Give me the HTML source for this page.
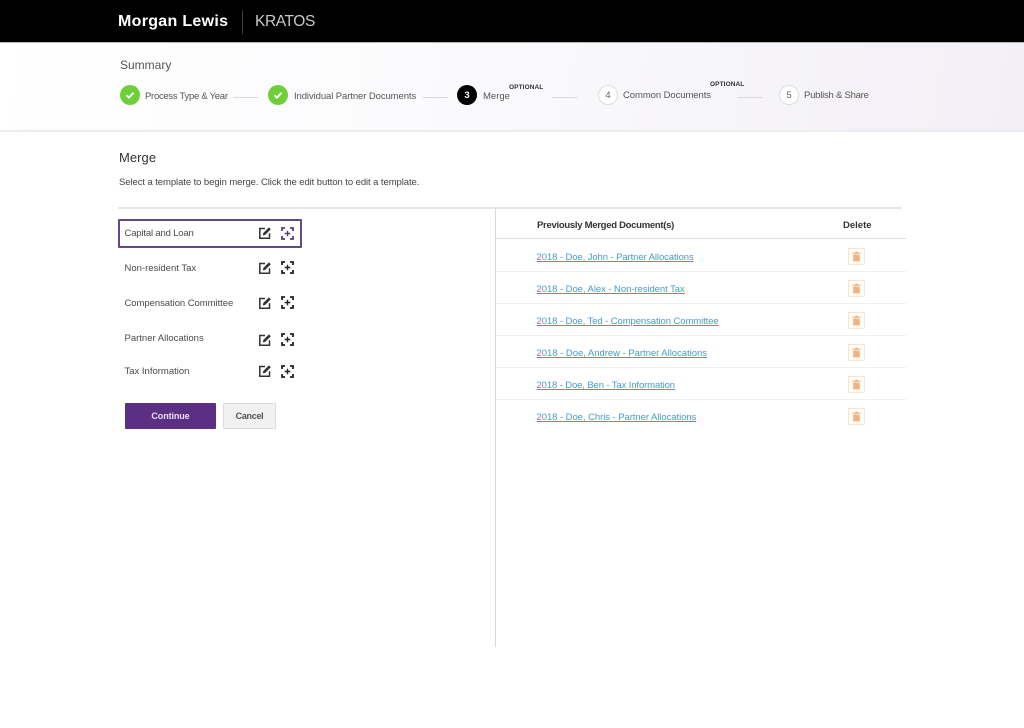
<!DOCTYPE html>
<html lang="en">
<head>
<meta charset="utf-8">
<title>Merge - Kratos</title>
<style>
html,body{margin:0;padding:0;background:#fff}
body{position:relative;width:1024px;height:728px;overflow:hidden;font-family:"Liberation Sans",sans-serif;color:#444}
#w{position:absolute;left:0;top:0;width:1024px;height:728px;filter:blur(.3px)}
.a{position:absolute;white-space:nowrap;line-height:16px}
.hdr{position:absolute;left:-10px;top:-10px;width:1044px;height:52px;background:#000;box-shadow:0 1px 3px rgba(0,0,0,.45)}
.band{position:absolute;left:-10px;top:43px;width:1044px;height:87px;background:linear-gradient(100deg,#fff 0%,#fbfbfd 40%,#f2eff6 100%);border-bottom:2px solid #ececee}
.st{font-size:9.5px;color:#555}
.line{position:absolute;height:1px;background:#d8d8dc;width:25px;top:97px}
.c{position:absolute;width:20px;height:20px;border-radius:50%;top:85px;text-align:center;line-height:21px;font-size:9.5px;box-sizing:border-box}
.done{background:#6fcf3a}
.cur{background:#000;color:#fff;font-weight:bold}
.todo{background:#fff;border:1px solid #ddd;color:#666;line-height:19px}
.opt{font-size:6.5px;font-weight:bold;color:#333;letter-spacing:.1px}
.lbl{font-size:9.5px;color:#4a4a4a;left:124.5px}
.ico{position:absolute;width:14px;height:14px}
.foc{position:absolute;width:13px;height:13px}
.row{position:absolute;left:496px;width:410px;height:1px;background:#f1f1f1}
.lnk{left:536.5px;font-size:9.5px;color:#3f9fc9;text-decoration:underline}
.del{position:absolute;left:848px;width:15px;height:15px;border:1px solid #f3e6d6;border-radius:1px;background:#fffdfa}
.del svg{position:absolute;left:2px;top:2px}
</style>
</head>
<body>
<div id="w">
<div class="hdr"></div>
<div class="a" style="left:118px;top:12px;line-height:20px;font-size:16px;font-weight:bold;color:#fff;letter-spacing:.3px">Morgan Lewis</div>
<div class="a" style="left:242px;top:10px;width:1px;height:24px;background:#3a3a3a"></div>
<div class="a" style="left:255px;top:12px;line-height:20px;font-size:15.5px;color:#c9c9c9;letter-spacing:-.4px">KRATOS</div>

<div class="band"></div>
<div class="a" style="left:120px;top:57px;font-size:12px;color:#555">Summary</div>

<div class="c done" style="left:119.5px"><svg width="20" height="20" viewBox="0 0 20 20"><path d="M6.5 10.2l2.4 2.4 4.6-4.8" fill="none" stroke="#fff" stroke-width="1.9"/></svg></div>
<div class="a st" style="left:145px;top:88.500px;letter-spacing:-.28px">Process Type &amp; Year</div>
<div class="line" style="left:233px"></div>
<div class="c done" style="left:268px"><svg width="20" height="20" viewBox="0 0 20 20"><path d="M6.5 10.2l2.4 2.4 4.6-4.8" fill="none" stroke="#fff" stroke-width="1.9"/></svg></div>
<div class="a st" style="left:294px;top:88.500px;letter-spacing:-.09px">Individual Partner Documents</div>
<div class="line" style="left:423px"></div>
<div class="c cur" style="left:457px">3</div>
<div class="a st" style="left:483px;top:88.500px">Merge</div>
<div class="a opt" style="left:509px;top:80px">OPTIONAL</div>
<div class="line" style="left:552px"></div>
<div class="c todo" style="left:598px">4</div>
<div class="a st" style="left:623px;top:87.500px;letter-spacing:-.08px">Common Documents</div>
<div class="a opt" style="left:710px;top:77px">OPTIONAL</div>
<div class="line" style="left:737px"></div>
<div class="c todo" style="left:779px">5</div>
<div class="a st" style="left:804px;top:87.500px;letter-spacing:-.23px">Publish &amp; Share</div>

<div class="a" style="left:119px;top:150px;font-size:13px;color:#333;letter-spacing:.05px">Merge</div>
<div class="a" style="left:119px;top:174.500px;font-size:9.5px;color:#444;letter-spacing:-.08px">Select a template to begin merge. Click the edit button to edit a template.</div>

<div class="a" style="left:118px;top:207px;width:784px;height:2px;background:#e6e6e6"></div>
<div class="a" style="left:495px;top:208px;width:1px;height:439px;background:#d9d9d9"></div>

<div class="a" style="left:118px;top:219px;width:180px;height:25px;border:2px solid #64478a;border-radius:1px"></div>
<div class="a lbl" style="top:226px;letter-spacing:-.17px">Capital and Loan</div>
<div class="a lbl" style="top:261px">Non-resident Tax</div>
<div class="a lbl" style="top:296px;letter-spacing:-.05px">Compensation Committee</div>
<div class="a lbl" style="top:331px">Partner Allocations</div>
<div class="a lbl" style="top:364px">Tax Information</div>

<svg width="0" height="0" style="position:absolute">
<defs>
<symbol id="edit" viewBox="0 0 14 14"><path d="M7 2.500H1.800v9.700h9.700V7.200" fill="none" stroke="#333" stroke-width="1.500"/><path d="M4.800 9.400l.5-2.400 5.600-5.600 1.900 1.900-5.600 5.600z" fill="#333"/></symbol>
<symbol id="focus" viewBox="0 0 13 13"><path d="M1 4V1h3M9 1h3v3M12 9v3H9M4 12H1V9" fill="none" stroke="currentColor" stroke-width="1.800"/><path d="M6.500 3.700v5.600M3.700 6.500h5.600" fill="none" stroke="currentColor" stroke-width="1.400"/></symbol>
<symbol id="trash" viewBox="0 0 11 11"><path d="M4.200 .6h2.600v1.100h2.700v1.200h-8V1.700h2.700zM2.200 3.600h6.600v6.800H2.200z" fill="#f3b27a"/></symbol>
</defs>
</svg>

<svg class="ico" style="left:257.500px;top:226px"><use href="#edit"/></svg>
<svg class="foc" style="left:281px;top:226.500px;color:#5c3a83"><use href="#focus"/></svg>
<svg class="ico" style="left:257.500px;top:261px"><use href="#edit"/></svg>
<svg class="foc" style="left:281px;top:261px;color:#222"><use href="#focus"/></svg>
<svg class="ico" style="left:257.500px;top:296px"><use href="#edit"/></svg>
<svg class="foc" style="left:281px;top:296px;color:#222"><use href="#focus"/></svg>
<svg class="ico" style="left:257.500px;top:333px"><use href="#edit"/></svg>
<svg class="foc" style="left:281px;top:333px;color:#222"><use href="#focus"/></svg>
<svg class="ico" style="left:257.500px;top:364px"><use href="#edit"/></svg>
<svg class="foc" style="left:281px;top:364.500px;color:#222"><use href="#focus"/></svg>

<div class="a" style="left:125px;top:403px;width:91px;height:26px;line-height:27px;background:#5b2f84;border-radius:1px;color:#e8e0ef;font-size:9px;font-weight:bold;text-align:center;letter-spacing:-.1px">Continue</div>
<div class="a" style="left:223px;top:403px;width:51px;height:24px;line-height:25px;background:#f1f1f1;border:1px solid #dcdcdc;border-radius:1px;color:#555;font-size:9px;font-weight:bold;text-align:center;letter-spacing:-.3px">Cancel</div>

<div class="a" style="left:537px;top:218px;font-size:9.500px;font-weight:bold;color:#333;letter-spacing:-.28px">Previously Merged Document(s)</div>
<div class="a" style="left:843px;top:218px;font-size:9.500px;font-weight:bold;color:#333">Delete</div>
<div class="row" style="top:238px;background:#dedede"></div>

<div class="a lnk" style="top:250px;letter-spacing:-.09px">2018 - Doe, John - Partner Allocations</div>
<div class="del" style="top:248px"><svg width="11" height="11"><use href="#trash"/></svg></div>
<div class="row" style="top:271px"></div>
<div class="a lnk" style="top:282px;letter-spacing:-.06px">2018 - Doe, Alex - Non-resident Tax</div>
<div class="del" style="top:280px"><svg width="11" height="11"><use href="#trash"/></svg></div>
<div class="row" style="top:303px"></div>
<div class="a lnk" style="top:314px;letter-spacing:-.09px">2018 - Doe, Ted - Compensation Committee</div>
<div class="del" style="top:312px"><svg width="11" height="11"><use href="#trash"/></svg></div>
<div class="row" style="top:335px"></div>
<div class="a lnk" style="top:346px;letter-spacing:-.03px">2018 - Doe, Andrew - Partner Allocations</div>
<div class="del" style="top:344px"><svg width="11" height="11"><use href="#trash"/></svg></div>
<div class="row" style="top:367px"></div>
<div class="a lnk" style="top:378px;letter-spacing:-.12px">2018 - Doe, Ben - Tax Information</div>
<div class="del" style="top:376px"><svg width="11" height="11"><use href="#trash"/></svg></div>
<div class="row" style="top:399px"></div>
<div class="a lnk" style="top:410px;letter-spacing:-.06px">2018 - Doe, Chris - Partner Allocations</div>
<div class="del" style="top:408px"><svg width="11" height="11"><use href="#trash"/></svg></div>
</div>
</body>
</html>
